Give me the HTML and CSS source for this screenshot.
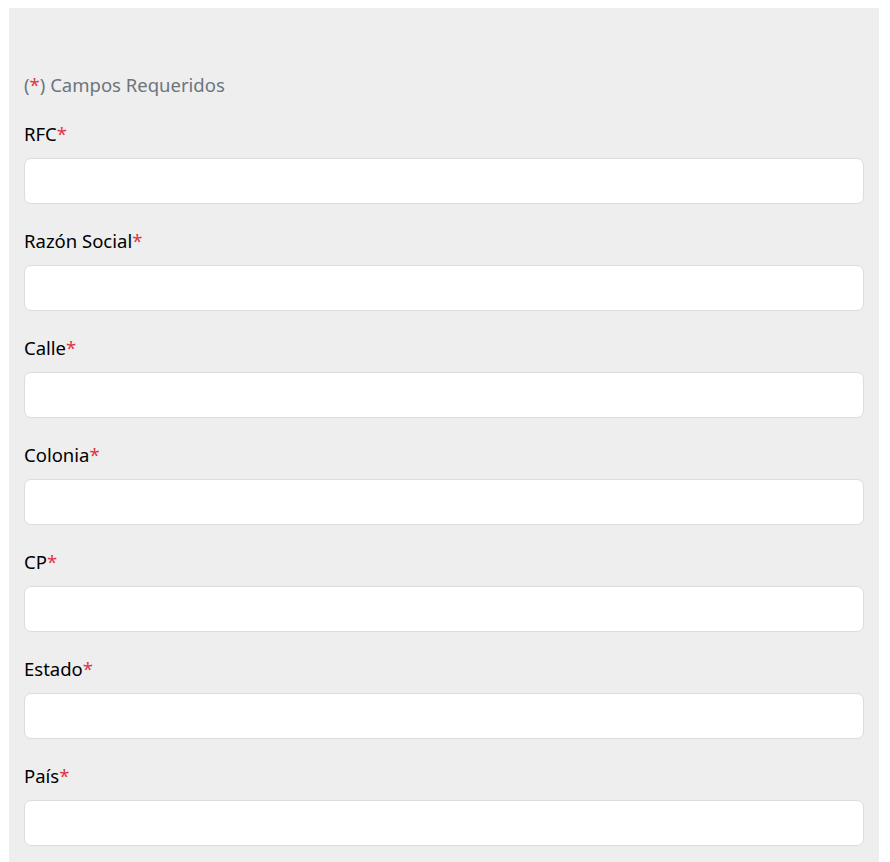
FILE: index.html
```html
<!DOCTYPE html>
<html lang="es">
<head>
<meta charset="utf-8">
<title>Formulario</title>
<link rel="stylesheet" href="styles.css">
</head>
<body>
<div class="panel">
  <p class="note"><span class="req">(<span class="star">*</span>)</span> Campos Requeridos</p>
  <div class="field">
    <label class="label">RFC<span class="star">*</span></label>
    <input class="input" type="text">
  </div>
  <div class="field">
    <label class="label">Razón Social<span class="star">*</span></label>
    <input class="input" type="text">
  </div>
  <div class="field">
    <label class="label">Calle<span class="star">*</span></label>
    <input class="input" type="text">
  </div>
  <div class="field">
    <label class="label">Colonia<span class="star">*</span></label>
    <input class="input" type="text">
  </div>
  <div class="field">
    <label class="label">CP<span class="star">*</span></label>
    <input class="input" type="text">
  </div>
  <div class="field">
    <label class="label">Estado<span class="star">*</span></label>
    <input class="input" type="text">
  </div>
  <div class="field">
    <label class="label">País<span class="star">*</span></label>
    <input class="input" type="text">
  </div>
</div>
</body>
</html>
```

FILE: styles.css
```css
html, body {
  margin: 0;
  padding: 0;
  background: #ffffff;
}
body {
  padding: 8px 11px 0 9px;
  font-family: "Noto Sans", "Open Sans", sans-serif;
  font-size: 18.5px;
  color: #000;
}
.panel {
  background: #eeeeee;
  padding: 63px 15px 40px 15px;
}
.note {
  margin: 0 0 22px 0;
  line-height: 27px;
  color: #6c757d;
}
.star {
  color: #dc3545;
}
.field {
  display: flex;
  flex-direction: column;
  margin-bottom: 23.5px;
}
.label {
  line-height: 27px;
  margin-bottom: 10.5px;
}
.input {
  box-sizing: border-box;
  height: 46px;
  width: 100%;
  border: 1px solid #dcdcdc;
  border-radius: 7px;
  background: #fff;
  margin: 0;
  padding: 6px 12px;
  font: inherit;
}
```
